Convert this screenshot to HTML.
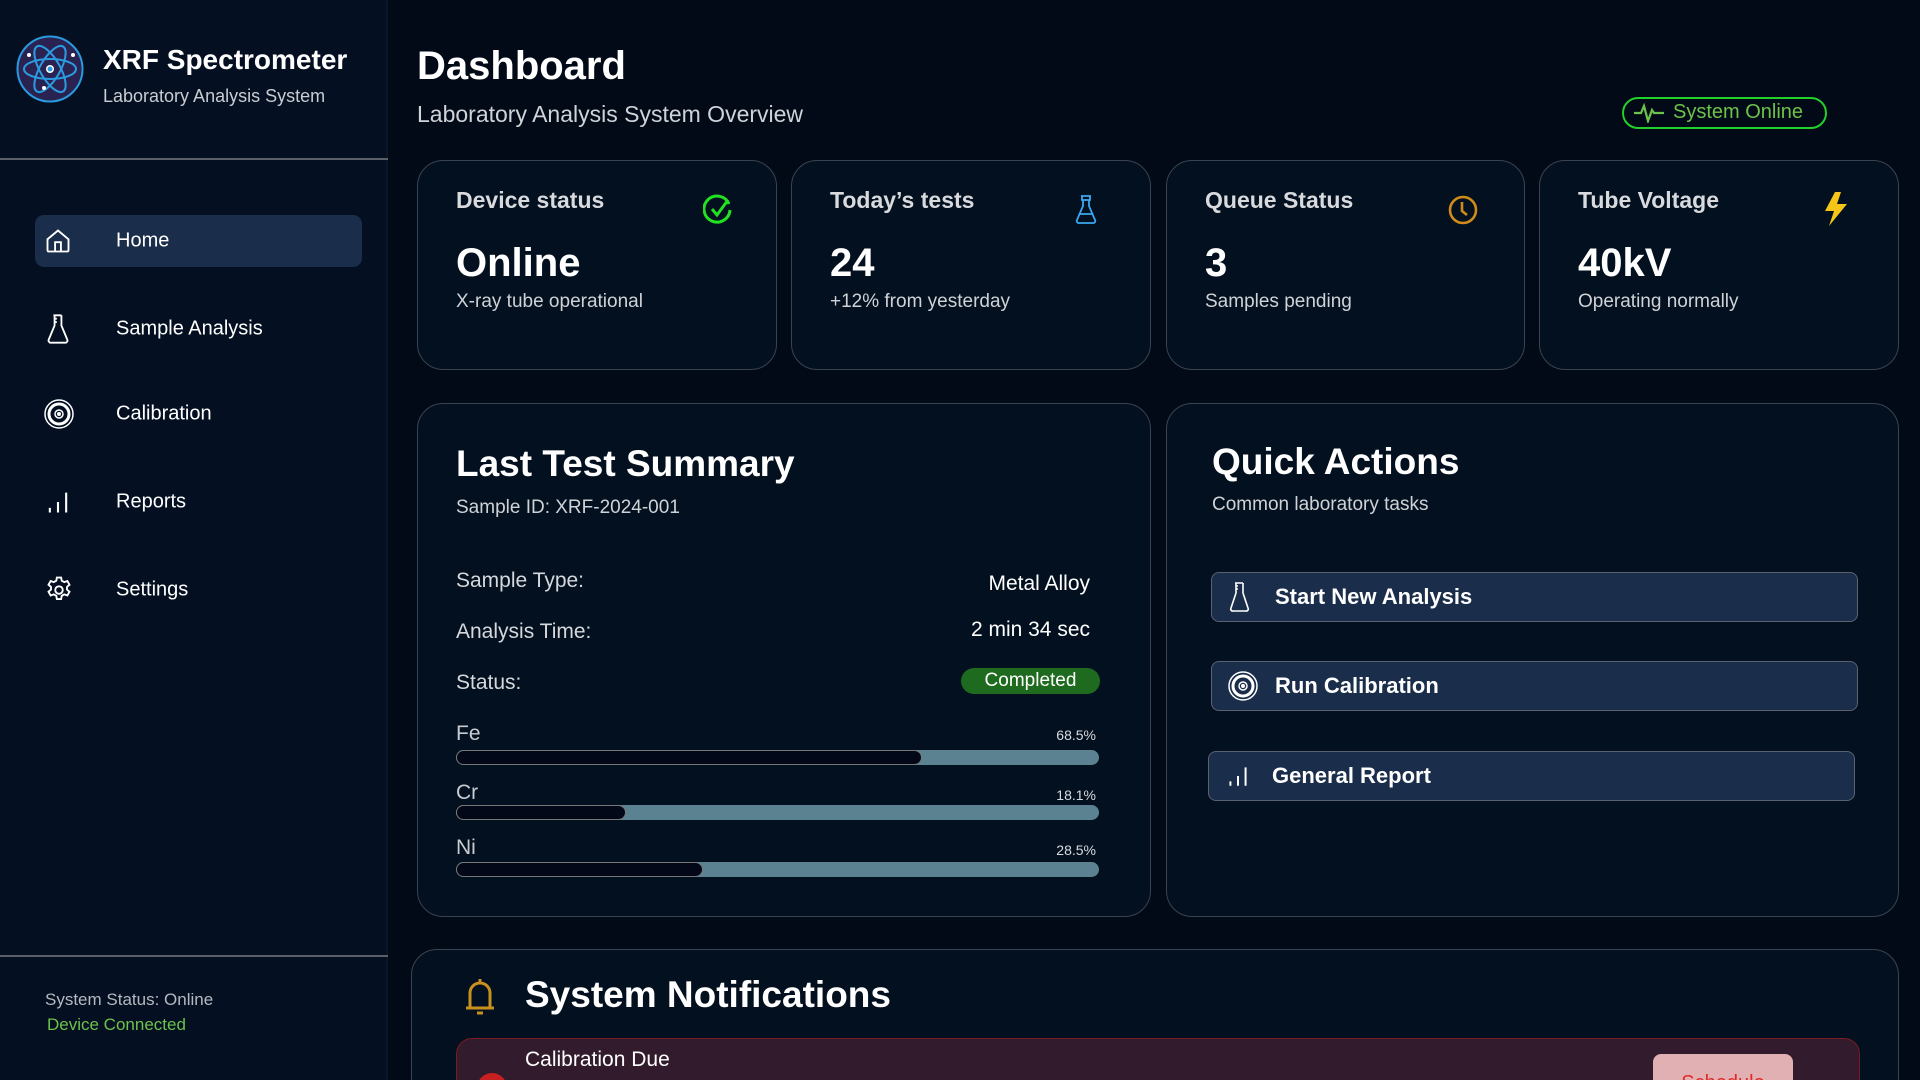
<!DOCTYPE html>
<html style="width:1920px;height:1080px;overflow:hidden"><head><meta charset="utf-8"><style>
*{box-sizing:border-box;margin:0;padding:0}
body{width:1920px;height:1080px;overflow:hidden;background:#020a17;font-family:"Liberation Sans",sans-serif;color:#fff;position:relative}
.a{position:absolute}
.side{left:0;top:0;width:388px;height:1080px;background:#041022;border-right:2px solid #0a1528}
.card{position:absolute;background:#03101f;border:1.5px solid #3a4350;border-radius:26px}
.ct{position:absolute;left:38px;top:26px;font-size:23px;color:#d8dade;font-weight:bold}
.cv{position:absolute;left:38px;top:80px;font-size:40px;font-weight:bold}
.cs{position:absolute;left:38px;top:130px;font-size:19px;color:#cfd2d6}
.nav{position:absolute;left:116px;font-size:20px;color:#fff;transform:translateY(-50%)}
.ni{position:absolute;left:44px;transform:translateY(-50%)}
.lbl{position:absolute;left:38px;font-size:21px;color:#d5d8dc;transform:translateY(-50%)}
.val{position:absolute;right:60px;font-size:21px;color:#fff;transform:translateY(-50%)}
.bar{position:absolute;left:38px;width:643px;height:15px;border-radius:8px;background:#5a8290}
.bar i{position:absolute;left:0;top:0;height:15px;border-radius:8px;background:#020818;border:1.5px solid #777}
.el{position:absolute;left:38px;font-size:21px;color:#c8ccd0}
.pc{position:absolute;right:54px;font-size:14px;color:#d8dade}
.btn{position:absolute;background:#1a2d4a;border:1.5px solid #5a6270;border-radius:8px;height:50px}
.btn span{position:absolute;left:63px;top:50%;transform:translateY(-50%);font-size:22px;font-weight:bold}
.btn svg{position:absolute;left:16px;top:50%;transform:translateY(-50%)}
</style></head><body>
<div class="a side">
 <svg class="a" style="left:16px;top:35px" width="68" height="68" viewBox="0 0 68 68"><circle cx="34" cy="34" r="32.5" fill="#2a2250" stroke="#2a9be0" stroke-width="2"/><g fill="none" stroke="#2a9be0" stroke-width="2"><ellipse cx="34" cy="34" rx="26" ry="10"/><ellipse cx="34" cy="34" rx="26" ry="10" transform="rotate(60 34 34)"/><ellipse cx="34" cy="34" rx="26" ry="10" transform="rotate(-60 34 34)"/></g><circle cx="34" cy="34" r="4" fill="#fff"/><circle cx="34" cy="34" r="2.5" fill="#2a9be0"/><circle cx="13" cy="20" r="2" fill="#fff"/><circle cx="57" cy="20" r="2" fill="#fff"/><circle cx="28" cy="53" r="2" fill="#fff"/></svg>
 <div class="a" style="left:103px;top:44px;font-size:28px;font-weight:bold">XRF Spectrometer</div>
 <div class="a" style="left:103px;top:86px;font-size:18px;color:#c9ccd1">Laboratory Analysis System</div>
 <div class="a" style="left:0;top:158px;width:388px;height:2px;background:#5a6068"></div>
 <div class="a" style="left:35px;top:215px;width:327px;height:52px;background:#1a2d4a;border-radius:9px"></div>
 <svg class="ni" style="top:241px" width="28" height="28" viewBox="0 0 24 24" fill="none" stroke="#fff" stroke-width="1.6"><path d="M3 10.5 12 3l9 7.5V20a1 1 0 0 1-1 1H4a1 1 0 0 1-1-1z"/><path d="M9.5 21v-8h5v8"/></svg>
 <div class="nav" style="top:241px">Home</div>
 <svg class="ni" style="top:329px" width="28" height="32" viewBox="0 0 24 28" fill="none" stroke="#fff" stroke-width="1.6"><path d="M8 2h7M9 2v9L4 23a2 2 0 0 0 2 3h12a2 2 0 0 0 2-3l-5-12V2M9 5h2M9 8h2"/></svg>
 <div class="nav" style="top:329px">Sample Analysis</div>
 <svg class="ni" style="top:414px" width="30" height="30" viewBox="0 0 30 30" fill="none" stroke="#fff"><circle cx="15" cy="15" r="14" stroke-width="1.5"/><circle cx="15" cy="15" r="10" stroke-width="3"/><circle cx="15" cy="15" r="4" stroke-width="1.5"/><circle cx="15" cy="15" r="1.5" fill="#fff"/></svg>
 <div class="nav" style="top:414px">Calibration</div>
 <svg class="ni" style="top:502px" width="28" height="28" viewBox="0 0 24 24" fill="none" stroke="#fff" stroke-width="1.8"><path d="M5 21v-4M12 21v-9M19 21V4"/></svg>
 <div class="nav" style="top:502px">Reports</div>
 <svg class="ni" style="top:590px" width="30" height="30" viewBox="0 0 24 24" fill="none" stroke="#fff" stroke-width="1.5"><circle cx="12" cy="12" r="3"/><path d="M10.3 2h3.4l.5 2.6 2 1.1 2.5-.9 1.7 3-2 1.7v2.2l2 1.7-1.7 3-2.5-.9-2 1.1-.5 2.6h-3.4l-.5-2.6-2-1.1-2.5.9-1.7-3 2-1.7v-2.2l-2-1.7 1.7-3 2.5.9 2-1.1z"/></svg>
 <div class="nav" style="top:590px">Settings</div>
 <div class="a" style="left:0;top:955px;width:388px;height:2px;background:#5a6068"></div>
 <div class="a" style="left:45px;top:990px;font-size:17px;color:#b5b9bf">System Status: Online</div>
 <div class="a" style="left:47px;top:1015px;font-size:17px;color:#6cc24a">Device Connected</div>
</div>

<div class="a" style="left:417px;top:44px;font-size:40px;font-weight:bold">Dashboard</div>
<div class="a" style="left:417px;top:101px;font-size:23px;color:#d0d3d8">Laboratory Analysis System Overview</div>
<div class="a" style="left:1622px;top:97px;width:205px;height:32px;border:2px solid #22d02a;border-radius:16px"></div>
<svg class="a" style="left:1633px;top:103px" width="32" height="20" viewBox="0 0 32 20" fill="none" stroke="#6cc24a" stroke-width="2.2"><path d="M1 10h7l3-7 4 15 4-11 2 3h10"/></svg>
<div class="a" style="left:1673px;top:101px;font-size:20px;color:#6cc24a">System Online</div>

<div class="card" style="left:417px;top:160px;width:360px;height:210px">
 <div class="ct">Device status</div>
 <svg class="a" style="left:285px;top:33px" width="30" height="32" viewBox="0 0 30 32" fill="none" stroke="#22e022" stroke-width="3"><path d="M26 10A13 13 0 1 0 27 16"/><path d="M9 15l5 6 11-15"/></svg>
 <div class="cv">Online</div><div class="cs">X-ray tube operational</div></div>
<div class="card" style="left:791px;top:160px;width:360px;height:210px">
 <div class="ct">Today’s tests</div>
 <svg class="a" style="left:283px;top:33px" width="22" height="30" viewBox="0 0 22 30" fill="none" stroke="#3aa8f0" stroke-width="1.8"><path d="M6 2h10M7 2v4h8V2M8 6v6L2 26a2 2 0 0 0 2 3h14a2 2 0 0 0 2-3l-6-14V6M5 20h12"/></svg>
 <div class="cv">24</div><div class="cs">+12% from yesterday</div></div>
<div class="card" style="left:1166px;top:160px;width:359px;height:210px">
 <div class="ct">Queue Status</div>
 <svg class="a" style="left:280px;top:33px" width="32" height="32" viewBox="0 0 32 32" fill="none" stroke="#d08b1a" stroke-width="2.6"><circle cx="16" cy="16" r="13"/><path d="M15 8v9l5 4"/></svg>
 <div class="cv">3</div><div class="cs">Samples pending</div></div>
<div class="card" style="left:1539px;top:160px;width:360px;height:210px">
 <div class="ct">Tube Voltage</div>
 <svg class="a" style="left:282px;top:31px" width="28" height="34" viewBox="0 0 28 34" fill="#f5c518"><path d="M13 0 3 19h9l-5 15L25 12h-10L19 0z"/></svg>
 <div class="cv">40kV</div><div class="cs">Operating normally</div></div>

<div class="card" style="left:417px;top:403px;width:734px;height:514px">
 <div class="a" style="left:38px;top:39px;font-size:37px;font-weight:bold">Last Test Summary</div>
 <div class="a" style="left:38px;top:93px;font-size:19px;color:#cfd2d6">Sample ID: XRF-2024-001</div>
 <div class="lbl" style="top:177px">Sample Type:</div><div class="val" style="top:180px">Metal Alloy</div>
 <div class="lbl" style="top:228px">Analysis Time:</div><div class="val" style="top:226px">2 min 34 sec</div>
 <div class="lbl" style="top:279px">Status:</div>
 <div class="a" style="left:543px;top:264px;width:139px;height:26px;border-radius:13px;background:#1e6a1e;font-size:19px;text-align:center;line-height:26px">Completed</div>
 <div class="el" style="top:318px">Fe</div><div class="pc" style="top:323px">68.5%</div>
 <div class="bar" style="top:346px"><i style="width:466px"></i></div>
 <div class="el" style="top:377px">Cr</div><div class="pc" style="top:383px">18.1%</div>
 <div class="bar" style="top:401px"><i style="width:170px"></i></div>
 <div class="el" style="top:432px">Ni</div><div class="pc" style="top:438px">28.5%</div>
 <div class="bar" style="top:458px"><i style="width:247px"></i></div>
</div>

<div class="card" style="left:1166px;top:403px;width:733px;height:514px">
 <div class="a" style="left:45px;top:37px;font-size:37px;font-weight:bold">Quick Actions</div>
 <div class="a" style="left:45px;top:90px;font-size:19px;color:#cfd2d6">Common laboratory tasks</div>
</div>
<div class="btn" style="left:1211px;top:572px;width:647px"><svg width="24" height="32" viewBox="0 0 24 32" fill="none" stroke="#fff" stroke-width="1.6"><path d="M7 2h8M8 2v10L3 27a2 2 0 0 0 2 3h13a2 2 0 0 0 2-3l-5-15V2M8 5h2M8 8h2"/></svg><span>Start New Analysis</span></div>
<div class="btn" style="left:1211px;top:661px;width:647px"><svg width="30" height="30" viewBox="0 0 30 30" fill="none" stroke="#fff"><circle cx="15" cy="15" r="14" stroke-width="1.5"/><circle cx="15" cy="15" r="10" stroke-width="3"/><circle cx="15" cy="15" r="4" stroke-width="1.5"/><circle cx="15" cy="15" r="1.5" fill="#fff"/></svg><span>Run Calibration</span></div>
<div class="btn" style="left:1208px;top:751px;width:647px"><svg width="26" height="26" viewBox="0 0 24 24" fill="none" stroke="#fff" stroke-width="1.8"><path d="M5 21v-4M12 21v-9M19 21V4"/></svg><span>General Report</span></div>

<div class="a" style="left:411px;top:949px;width:1488px;height:131px;overflow:hidden">
<div class="card" style="left:0;top:0;width:1488px;height:200px">
 <svg class="a" style="left:50px;top:26px" width="36" height="42" viewBox="0 0 36 42" fill="none" stroke="#c8901e" stroke-width="3"><path d="M18 3v3M8 32V17a10 10 0 0 1 20 0v15M4 32h28M15 37h6"/></svg>
 <div class="a" style="left:113px;top:24px;font-size:37px;font-weight:bold">System Notifications</div>
 <div class="a" style="left:44px;top:88px;width:1404px;height:100px;background:#321b2c;border:1.5px solid #7a1a22;border-radius:16px">
  <div class="a" style="left:20px;top:34px;width:30px;height:30px;border-radius:50%;background:#c62020"></div>
  <div class="a" style="left:68px;top:9px;font-size:21px">Calibration Due</div>
  <div class="a" style="left:1196px;top:15px;width:140px;height:50px;background:#e0b0b3;border-radius:8px;color:#e02a2a;font-size:20px;text-align:center;padding-top:18px">Schedule</div>
 </div>
</div>
</div>
</body></html>
